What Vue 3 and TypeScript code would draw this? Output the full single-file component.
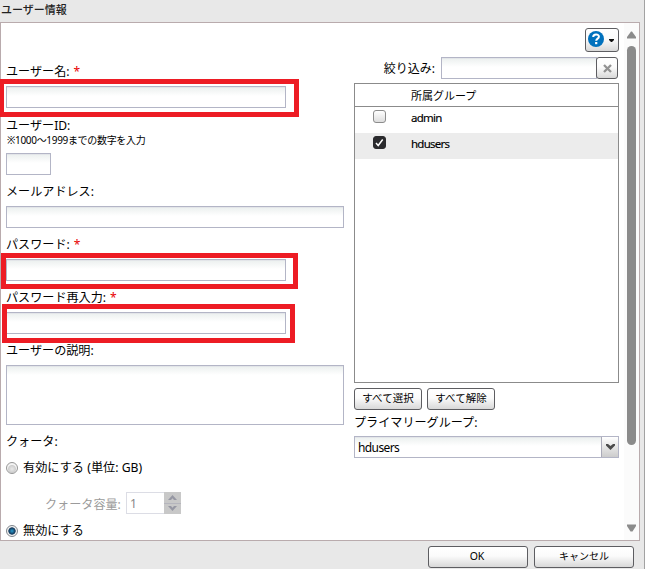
<script setup lang="ts">
import { ref } from 'vue'

interface Group {
  name: string
  checked: boolean
}

const username = ref('')
const userId = ref('')
const mail = ref('')
const password = ref('')
const confirmation = ref('')
const description = ref('')
const filter = ref('')
const quota = ref<'on' | 'off'>('off')
const groups = ref<Group[]>([
  { name: 'admin', checked: false },
  { name: 'hdusers', checked: true },
])

function setAll(value: boolean) {
  groups.value.forEach((g) => (g.checked = value))
}
</script>

<template>
  <div class="window">
    <header class="title"><span class="t-title">ユーザー情報</span></header>
    <main class="panel">
      <section class="left">
        <div class="field first">
          <label><span>ユーザー名:</span><b>*</b></label>
          <div class="slot">
            <input v-model="username" class="box medium" type="text" />
            <i class="mark mark-user"></i>
          </div>
        </div>
        <div class="field id-field">
          <label><span>ユーザーID:</span></label>
          <div class="hint">※1000～1999までの数字を入力</div>
          <input v-model="userId" class="box small" type="text" />
        </div>
        <div class="field">
          <label><span>メールアドレス:</span></label>
          <input v-model="mail" class="box" type="text" />
        </div>
        <div class="field">
          <label><span>パスワード:</span><b>*</b></label>
          <div class="slot">
            <input v-model="password" class="box medium" type="password" />
            <i class="mark mark-pass"></i>
          </div>
        </div>
        <div class="field">
          <label><span>パスワード再入力:</span><b>*</b></label>
          <div class="slot">
            <input v-model="confirmation" class="box medium" type="password" />
            <i class="mark mark-confirm"></i>
          </div>
        </div>
        <div class="field">
          <label><span>ユーザーの説明:</span></label>
          <textarea v-model="description" class="box area"></textarea>
        </div>
        <div class="field quota-label"><label><span>クォータ:</span></label></div>
        <div class="radio-row enable" @click="quota = 'on'">
          <i class="radio" :class="{ on: quota === 'on' }"></i>
          <span>有効にする (単位: GB)</span>
        </div>
        <div class="capacity">
          <span>クォータ容量:</span>
          <div class="spinner">
            <span class="value">1</span>
            <div class="steps">
              <div><svg width="9" height="5" viewBox="0 0 9 5"><path d="M0 5 4.500 0 9 5H6L4.500 3.300 3 5Z" fill="#9697a3" /></svg></div>
              <div><svg width="9" height="5" viewBox="0 0 9 5"><path d="M0 0 4.500 5 9 0H6L4.500 1.700 3 0Z" fill="#9697a3" /></svg></div>
            </div>
          </div>
        </div>
        <div class="radio-row disable" @click="quota = 'off'">
          <i class="radio" :class="{ on: quota === 'off' }"></i>
          <span>無効にする</span>
        </div>
      </section>

      <section class="right">
        <div class="tools">
          <button class="btn help" aria-label="help">
            <svg width="16" height="16" viewBox="0 0 16 16">
              <circle cx="8" cy="8" r="8" fill="#0071bd" />
              <path d="M5.200 6.100C5.200 2.800 10.900 2.700 10.900 5.700C10.900 7.600 8.200 7.700 8.200 9.800" fill="none" stroke="#fff" stroke-width="2" />
              <rect x="7.100" y="11" width="2.200" height="2.200" fill="#fff" />
            </svg>
            <svg width="5" height="3" viewBox="0 0 5 3"><path d="M0 0H5V1L3 3H2L0 1Z" fill="#111" /></svg>
          </button>
        </div>
        <div class="filter">
          <label>絞り込み:</label>
          <input v-model="filter" class="box" type="text" />
          <button class="btn clear" aria-label="clear" @click="filter = ''">
            <svg width="9" height="9" viewBox="0 0 9 9"><path d="M1 1 8 8M8 1 1 8" stroke="#929292" stroke-width="2.300" /></svg>
          </button>
        </div>
        <div class="table">
          <div class="thead"><span>所属グループ</span></div>
          <div v-for="g in groups" :key="g.name" class="row" :class="{ selected: g.checked }" @click="g.checked = !g.checked">
            <i class="check" :class="{ on: g.checked }">
              <svg v-if="g.checked" width="11" height="11" viewBox="0 0 11 11"><path d="M2 6 4.200 8.500 8.700 2.500" fill="none" stroke="#fff" stroke-width="1.500" /></svg>
            </i>
            <span>{{ g.name }}</span>
          </div>
        </div>
        <div class="bulk">
          <button class="btn" @click="setAll(true)">すべて選択</button>
          <button class="btn" @click="setAll(false)">すべて解除</button>
        </div>
        <div class="primary">プライマリーグループ:</div>
        <div class="box select">
          <span>hdusers</span>
          <i><svg width="9" height="6" viewBox="0 0 9 6"><path d="M0 0H2L4.500 2 7 0H9V1.500L4.500 6 0 1.500Z" fill="#4b4b4b" /></svg></i>
        </div>
      </section>

      <div class="scrollbar">
        <svg width="9" height="8" viewBox="0 0 9 8"><path d="M4 .5H5L9 6V7.500H0V6Z" fill="#8b8b8b" /></svg>
        <div class="thumb"></div>
        <svg class="down" width="9" height="8" viewBox="0 0 9 8"><path d="M0 .5H9V2L5.500 7.500H3.500L0 2Z" fill="#8b8b8b" /></svg>
      </div>
    </main>
    <footer class="footer">
      <button class="btn ok">OK</button>
      <button class="btn cancel">キャンセル</button>
    </footer>
  </div>
</template>

<style>
body {
  margin: 0;
  overflow: hidden;
}
</style>

<style scoped>
* {
  box-sizing: border-box;
}
.window {
  width: 645px;
  height: 569px;
  display: flex;
  flex-direction: column;
  background: #e8e8e8;
  border-right: 1px solid #a2a2a2;
  font: 12px/20px 'Noto Sans', 'Noto Sans CJK JP', sans-serif;
  color: #000;
  overflow: hidden;
}
.title {
  height: 22px;
  padding-left: 1px;
  font-size: 11px;
  font-weight: 500;
  line-height: 19px;
  color: #222;
}
.panel {
  width: 640px;
  height: 519px;
  display: flex;
  border: 1px solid #b9abad;
  background: #fff;
}
.left {
  width: 338px;
  margin-left: 5px;
}
.right {
  width: 265px;
  margin-left: 10px;
}
.field {
  display: flex;
  flex-direction: column;
  align-items: flex-start;
  height: 53px;
}
.field label {
  display: flex;
  height: 25px;
  font-size: 12.100px;
  line-height: 22px;
  white-space: nowrap;
}
.field b {
  margin-left: 4px;
  color: #e80000;
  font-weight: 400;
}
.first {
  height: 92px;
  padding-top: 38px;
}
.id-field {
  height: 66px;
}
.id-field label {
  height: 17px;
}
.hint {
  height: 21px;
  padding-left: 1px;
  font: 10px/16px 'Noto Sans', 'Noto Sans CJK JP', sans-serif;
  letter-spacing: -0.320px;
  white-space: nowrap;
}
.box {
  display: block;
  width: 338px;
  height: 22px;
  flex: none;
  margin: 0;
  padding: 2px 4px;
  border: 1px solid #b3b5c6;
  border-radius: 0;
  outline: none;
  background: linear-gradient(#d9dae2 0, #edf1f0 1px, #fff 9px);
  font: inherit;
}
.medium {
  width: 280px;
}
.small {
  width: 45px;
}
.area {
  height: 60px;
  resize: none;
}
.slot {
  position: relative;
}
.mark {
  position: absolute;
  border: 5px solid #ed1c24;
  pointer-events: none;
}
.mark-user {
  left: -7px;
  top: -7px;
  width: 300px;
  height: 38px;
}
.mark-pass {
  left: -5px;
  top: -6px;
  width: 297px;
  height: 36px;
}
.mark-confirm {
  left: -4px;
  top: -8px;
  width: 293px;
  height: 39px;
}
.field:has(.area) {
  height: 91px;
}
.quota-label {
  height: 26px;
}
.radio-row {
  display: flex;
  align-items: center;
  height: 20px;
  gap: 5px;
  font-size: 12.200px;
  line-height: 22px;
  white-space: nowrap;
}
.radio-row span {
  padding-top: 1px;
}
.radio {
  width: 12px;
  height: 12px;
  margin-top: 1px;
  border: 1px solid #969696;
  border-radius: 50%;
  background: radial-gradient(circle at 50% 60%, #e9e9e9 0, #cfcfcf 3.500px, #f4f4f4 4.500px);
}
.radio.on {
  border-color: #7f858b;
  background: radial-gradient(circle at 50% 50%, #279ed0 0, #17486e 2.600px, #14385a 3.300px, #f2f2f2 4px);
}
.capacity {
  display: flex;
  height: 43px;
  padding: 15px 0 0 39px;
  color: #9b9b9b;
  font-size: 12.100px;
  line-height: 25px;
}
.capacity > span {
  width: 81px;
  white-space: nowrap;
}
.spinner {
  display: flex;
  width: 55px;
  height: 22px;
  border: 1px solid #dcdde5;
  border-right: 0;
}
.value {
  flex: 1;
  padding-left: 3px;
  line-height: 22px;
  color: #888;
}
.steps {
  width: 17px;
  margin: -1px 0;
  display: grid;
  grid-template-rows: 1fr 1fr;
  gap: 1px;
  background: #b5b5bd;
}
.steps div {
  display: flex;
  align-items: center;
  justify-content: center;
  background: #c8c8c8;
}
.btn {
  display: flex;
  align-items: center;
  justify-content: center;
  height: 22px;
  margin: 0;
  padding: 0 0 2px;
  border: 1px solid #5d5d61;
  border-radius: 3px;
  background: linear-gradient(#fff 0, #fbfbfb 45%, #d8d8d8 100%);
  color: #000;
  font: 11px/18px 'Noto Sans', 'Noto Sans CJK JP', sans-serif;
  white-space: nowrap;
}
.tools {
  display: flex;
  justify-content: flex-end;
  height: 34px;
  padding-top: 5px;
}
.help {
  width: 34px;
  height: 24px;
  padding-right: 3px;
  gap: 5px;
}
.help svg:last-child {
  margin-top: 3px;
}
.filter {
  display: flex;
  height: 26px;
}
.filter label {
  width: 87px;
  padding-right: 6px;
  text-align: right;
  line-height: 23px;
}
.filter .box {
  width: 156px;
}
.clear {
  width: 22px;
  margin-left: -1px;
  padding: 0;
}
.table {
  height: 300px;
  border: 1px solid #8b8b8b;
}
.thead {
  height: 23px;
  padding-left: 56px;
  border-bottom: 1px solid #8b8b8b;
  font-size: 11px;
  line-height: 23px;
}
.row {
  display: flex;
  height: 26px;
  padding: 3px 0 0 18px;
  font-size: 11.500px;
  letter-spacing: -0.750px;
  line-height: 15px;
}
.row > span {
  -webkit-text-stroke: 0.150px #000;
}
.selected {
  background: #ececec;
}
.check {
  width: 13px;
  height: 13px;
  margin-right: 25px;
  border: 1px solid #8c8c8c;
  border-radius: 3px;
  background: linear-gradient(#fff, #ddd);
}
.check.on {
  background: #2b2b2e;
  border-color: #2b2b2e;
}
.check svg {
  display: block;
}
.bulk {
  display: flex;
  gap: 5px;
  height: 29px;
  padding-top: 5px;
}
.bulk .btn {
  width: 68px;
  font-size: 10.500px;
}
.primary {
  height: 24px;
  line-height: 21px;
  font-size: 12.100px;
}
.select {
  display: flex;
  width: 265px;
  padding: 0 0 0 3px;
  line-height: 21px;
  letter-spacing: -0.600px;
}
.select span {
  flex: 1;
}
.select i {
  display: flex;
  width: 17px;
  align-items: center;
  justify-content: center;
  border-left: 1px solid #aaaab8;
  background: linear-gradient(#fff, #ccc);
}
.scrollbar {
  display: flex;
  flex-direction: column;
  align-items: center;
  width: 15px;
  margin-left: auto;
  padding-top: 8px;
  background: #fbfbfb;
}
.thumb {
  width: 9px;
  height: 399px;
  margin-top: 7px;
  border-radius: 5px;
  background: #8b8b8b;
}
.down {
  margin-top: 79px;
}
.footer {
  display: flex;
  gap: 6px;
  padding: 5px 0 0 428px;
}
.footer .btn {
  width: 100px;
}
.footer .cancel {
  font-size: 10px;
}
.footer .ok {
  padding-right: 2px;
  font-size: 10.500px;
}
</style>
